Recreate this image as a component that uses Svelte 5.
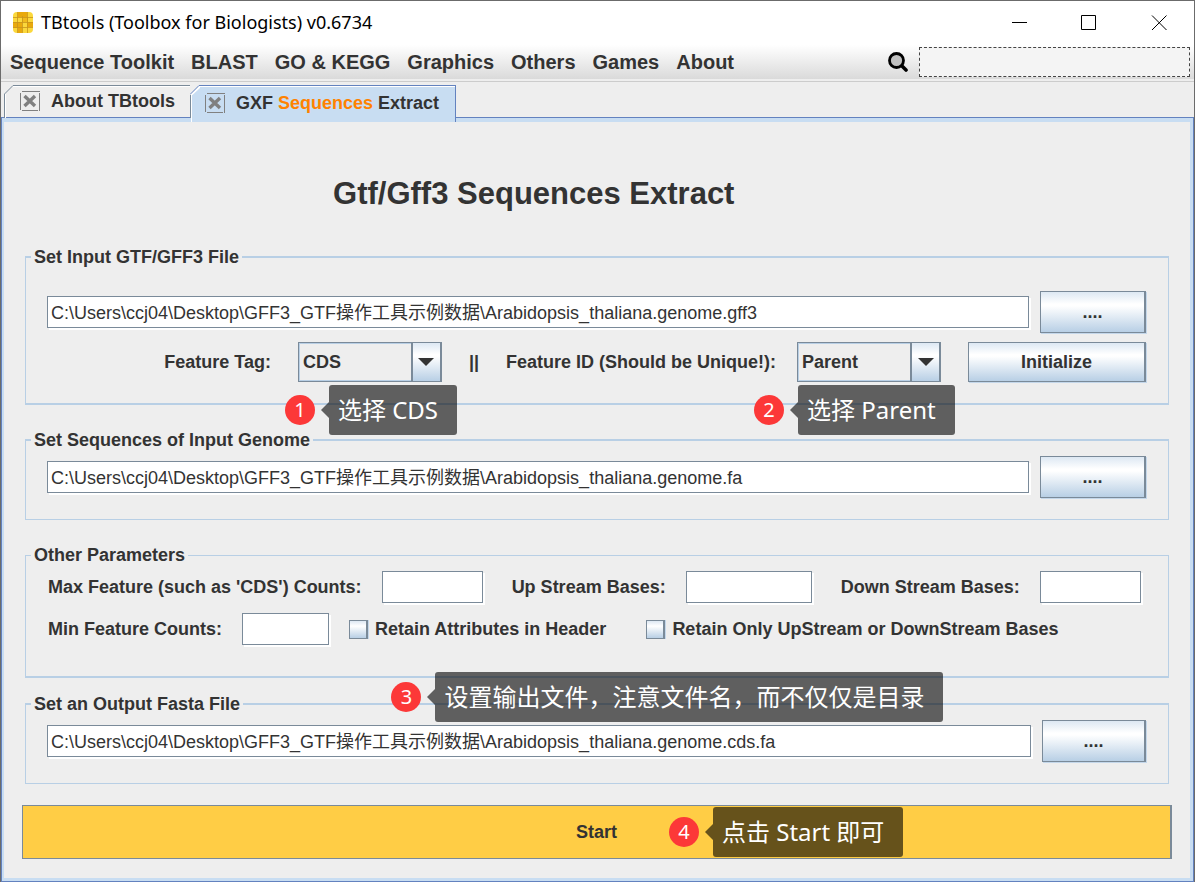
<script>
  // Menu entries
  const menus = ['Sequence Toolkit', 'BLAST', 'GO & KEGG', 'Graphics', 'Others', 'Games', 'About'];

  // Form state
  let gffFile = 'C:\\Users\\ccj04\\Desktop\\GFF3_GTF操作工具示例数据\\Arabidopsis_thaliana.genome.gff3';
  let genomeFile = 'C:\\Users\\ccj04\\Desktop\\GFF3_GTF操作工具示例数据\\Arabidopsis_thaliana.genome.fa';
  let outputFile = 'C:\\Users\\ccj04\\Desktop\\GFF3_GTF操作工具示例数据\\Arabidopsis_thaliana.genome.cds.fa';
  let featureTag = 'CDS';
  let featureId = 'Parent';
  let search = '';
  let maxCount = '';
  let minCount = '';
  let upStream = '';
  let downStream = '';
  let retainAttributes = false;
  let retainOnly = false;
</script>

{#snippet closeBox()}
  <svg class="close-box" viewBox="0 0 20 20" aria-hidden="true">
    <path d="M2 .5H20M.5 2V19M2 19.5H18M19.5 2V20" stroke="#808080" fill="none" />
    <path d="M4.5 5L15 15M15 5L4.5 15" stroke="#808080" stroke-width="3.4" />
  </svg>
{/snippet}

{#snippet callout(number, text)}
  <span class="badge">{number}</span>
  <span class="bubble">{text}</span>
{/snippet}

<div class="window">
  <header class="titlebar">
    <svg class="logo" viewBox="0 0 20 22" aria-hidden="true">
      <rect x="0" y="0" width="20" height="21" rx="4" fill="#fbd83c" />
      <path d="M5 0h9v5h-9zM0 10h9v6h-9zM13 5h2v5h-2zM14 10h6v5h-6zM5 16h4v5h-4z" fill="#e9a90c" />
      <path d="M9 5h5v5h-5z" fill="#f1bb1d" />
      <path d="M4.5 0V21M9.5 4V21M14.5 0V21M0 5.5H20M0 10.5H20M0 15.5H20" stroke="#c8941c" stroke-width=".8" fill="none" />
    </svg>
    <span class="caption">TBtools (Toolbox for Biologists) v0.6734</span>
    <div class="controls">
      <button type="button" aria-label="Minimize">
        <svg viewBox="0 0 16 16"><path d="M1 7.5H16" /></svg>
      </button>
      <button type="button" aria-label="Maximize">
        <svg viewBox="0 0 16 16"><path d="M.5 .5H14.5V14.5H.5Z" /></svg>
      </button>
      <button type="button" aria-label="Close">
        <svg viewBox="0 0 16 16"><path d="M1 .5L15.5 15M15.5 .5L1 15" /></svg>
      </button>
    </div>
  </header>

  <nav class="menubar">
    {#each menus as menu}
      <button type="button">{menu}</button>
    {/each}
    <svg class="magnifier" viewBox="0 0 20 20" aria-hidden="true">
      <path d="M13 13L18 18" stroke="#000" stroke-width="3.6" stroke-linecap="round" />
      <circle cx="8.5" cy="8.5" r="7" fill="#c0c0c0" stroke="#000" stroke-width="2.8" />
    </svg>
    <input class="search" type="text" aria-label="Search" bind:value={search} />
  </nav>

  <div class="tabs" role="tablist">
    <button class="tab" type="button" role="tab" aria-selected="false">
      <svg class="corner" viewBox="0 0 10 10" aria-hidden="true">
        <path d="M0 0H10L0 10Z" fill="#eee" />
        <path d="M.5 10V9L9 .5H10" stroke="#7a8a99" fill="none" />
      </svg>
      {@render closeBox()}
      <span>About TBtools</span>
    </button>
    <button class="tab selected" type="button" role="tab" aria-selected="true">
      <svg class="corner" viewBox="0 0 10 10" aria-hidden="true">
        <path d="M0 0H10L0 10Z" fill="#eee" />
        <path d="M1 10L10 1.5" stroke="#fff" stroke-width="2" fill="none" />
        <path d="M.5 9L9 .5H10" stroke="#6382bf" fill="none" />
      </svg>
      {@render closeBox()}
      <span>GXF <em>Sequences</em> Extract</span>
    </button>
  </div>

  <main class="panel">
    <h1>Gtf/Gff3 Sequences Extract</h1>

    <fieldset class="thick-top thick-bottom">
      <legend>Set Input GTF/GFF3 File</legend>
      <div class="body tall">
        <div class="file-row">
          <input class="field" type="text" aria-label="Input GTF/GFF3 file" bind:value={gffFile} />
          <button class="metal browse" type="button">....</button>
        </div>
        <div class="tag-row">
          <label for="feature-tag">Feature Tag:</label>
          <div class="combo">
            <select id="feature-tag" bind:value={featureTag}>
              <option>CDS</option>
              <option>exon</option>
              <option>gene</option>
            </select>
            <span class="arrow"></span>
            <div class="callout tag-callout">{@render callout(1, '选择 CDS')}</div>
          </div>
          <span>||</span>
          <label class="id-label" for="feature-id">Feature ID (Should be Unique!):</label>
          <div class="combo">
            <select id="feature-id" bind:value={featureId}>
              <option>Parent</option>
              <option>ID</option>
              <option>Name</option>
            </select>
            <span class="arrow"></span>
            <div class="callout id-callout">{@render callout(2, '选择 Parent')}</div>
          </div>
          <button class="metal initialize" type="button">Initialize</button>
        </div>
      </div>
    </fieldset>

    <fieldset class="thick-top">
      <legend>Set Sequences of Input Genome</legend>
      <div class="body">
        <div class="file-row">
          <input class="field" type="text" aria-label="Genome sequences file" bind:value={genomeFile} />
          <button class="metal browse" type="button">....</button>
        </div>
      </div>
    </fieldset>

    <fieldset class="thick-bottom">
      <legend>Other Parameters</legend>
      <div class="body params">
        <div class="param-row">
          <label class="param">Max Feature (such as 'CDS') Counts: <input class="field medium" type="text" bind:value={maxCount} /></label>
          <label class="param">Up Stream Bases: <input class="field wide" type="text" bind:value={upStream} /></label>
          <label class="param">Down Stream Bases: <input class="field medium" type="text" bind:value={downStream} /></label>
        </div>
        <div class="param-row checks">
          <label class="param">Min Feature Counts: <input class="field narrow" type="text" bind:value={minCount} /></label>
          <label class="check first"><input type="checkbox" bind:checked={retainAttributes} />Retain Attributes in Header</label>
          <label class="check"><input type="checkbox" bind:checked={retainOnly} />Retain Only UpStream or DownStream Bases</label>
        </div>
      </div>
    </fieldset>

    <fieldset class="thick-top output">
      <legend>Set an Output Fasta File</legend>
      <div class="body">
        <div class="file-row">
          <input class="field" type="text" aria-label="Output fasta file" bind:value={outputFile} />
          <button class="metal browse" type="button">....</button>
        </div>
      </div>
      <div class="callout output-callout">{@render callout(3, '设置输出文件，注意文件名，而不仅仅是目录')}</div>
    </fieldset>

    <div class="start-row">
      <button class="start" type="button">Start</button>
      <div class="callout start-callout">{@render callout(4, '点击 Start 即可')}</div>
    </div>
  </main>
</div>

<style>
  :global(body) {
    background: #eee;
  }

  .window {
    --line: #b8cfe5;
    --edge: #7a8a99;
    --accent: #6382bf;
    --tab: #c8ddf2;
    display: flex;
    flex-direction: column;
    box-sizing: border-box;
    min-height: 100vh;
    border: 1px solid #6b6b6b;
    background: #eee;
    color: #333;
    font: bold 18px/22px "Liberation Sans", "Noto Sans CJK SC", sans-serif;
  }

  .window * {
    box-sizing: border-box;
  }

  button, input, select {
    margin: 0;
    padding: 0;
    border: none;
    border-radius: 0;
    background: none;
    color: inherit;
    font: inherit;
  }

  svg {
    display: block;
    flex: none;
  }

  /* Title bar */
  .titlebar {
    display: flex;
    align-items: center;
    height: 44px;
    padding-left: 12px;
    background: #fff;
    color: #000;
    font: 18px/24px "Noto Sans", "Open Sans", sans-serif;
  }

  .logo {
    width: 20px;
    height: 22px;
    margin-right: 8px;
  }

  .caption {
    flex: 1;
    padding-bottom: 2px;
  }

  .controls {
    display: flex;
  }

  .controls button {
    display: flex;
    align-items: center;
    justify-content: center;
    width: 70px;
    height: 44px;
  }

  .controls svg {
    width: 16px;
    height: 16px;
    fill: none;
    stroke: #000;
  }

  /* Menu bar */
  .menubar {
    display: flex;
    align-items: center;
    gap: 17px;
    height: 34px;
    padding: 0 4px 0 9px;
    background: linear-gradient(#fff, #dadada);
    font-size: 20px;
  }

  .magnifier {
    width: 20px;
    height: 20px;
    margin-left: auto;
    margin-right: -6px;
  }

  .search {
    width: 23%;
    height: 30px;
    border: 1px dashed #444;
    background: #f4f4f4;
  }

  /* Tabs */
  .tabs {
    display: flex;
    align-items: flex-end;
    margin-top: 2px;
    padding: 3px 0 0 3px;
    border-top: 1px solid #ccc;
  }

  .tab {
    position: relative;
    display: flex;
    align-items: center;
    gap: 11px;
    height: 33px;
    padding: 0 15px 2px;
    border: 1px solid var(--edge);
    border-bottom: none;
    box-shadow: inset 1px 1px #fff;
    white-space: nowrap;
  }

  .tab.selected {
    z-index: 1;
    height: 37px;
    margin-bottom: -4px;
    padding: 0 16px 2px 14px;
    border-color: var(--accent);
    border-left: none;
    background: var(--tab);
  }

  .corner {
    position: absolute;
    top: -1px;
    left: -1px;
    width: 10px;
    height: 10px;
  }

  .close-box {
    width: 20px;
    height: 20px;
  }

  em {
    color: #ff8200;
    font-style: normal;
  }

  /* Main panel */
  .panel {
    flex: 1;
    margin: 0 1px;
    padding: 0 18px 17px;
    border: solid var(--tab);
    border-width: 4px 3px 3px 2px;
    outline: 1px solid var(--accent);
  }

  h1 {
    margin: 54px 0 34px;
    padding-right: 11%;
    font-size: 31px;
    line-height: 36px;
    text-align: center;
  }

  fieldset {
    position: relative;
    min-width: 0;
    margin: 0 3px 24px;
    padding: 0;
    border: 1px solid var(--line);
  }

  .thick-top {
    border-top-width: 2px;
  }

  .thick-bottom {
    border-bottom-width: 2px;
  }

  legend {
    margin-left: 5px;
    padding: 0 3px;
  }

  .body {
    display: flex;
    flex-direction: column;
    gap: 9px;
    padding: 5px 22px 21px 21px;
  }

  .tall {
    padding-top: 23px;
  }

  .params {
    gap: 10px;
    padding-bottom: 31px;
  }

  fieldset:has(.params) {
    margin-bottom: 15px;
  }

  .output {
    margin-bottom: 21px;
  }

  .file-row {
    display: flex;
    align-items: center;
    gap: 11px;
  }

  .field {
    flex: 1;
    min-width: 0;
    height: 32px;
    padding: 0 3px 2px;
    border: 1px solid var(--edge);
    background: #fff;
    box-shadow: 2px 2px #fff;
    font-weight: normal;
  }

  .metal {
    border: 1px solid var(--edge);
    border-right-width: 2px;
    background: linear-gradient(#dde8f3, #fff 30%, #fff 35%, #b8cfe5);
    box-shadow: 1px 1px #c4d7ea;
  }

  .browse {
    width: 106px;
    height: 42px;
  }

  .output .browse {
    width: 104px;
  }

  .initialize {
    width: 178px;
    height: 40px;
  }

  /* Feature tag row */
  .tag-row {
    display: flex;
    align-items: center;
    justify-content: flex-end;
    gap: 27px;
  }

  .id-label {
    margin-right: -6px;
  }

  .combo {
    position: relative;
    display: flex;
    width: 144px;
    height: 40px;
    border: 1px solid var(--edge);
  }

  .combo select {
    flex: 1;
    appearance: none;
    padding: 0 3px;
    border: 1px solid var(--line);
  }

  .arrow {
    position: absolute;
    top: 0;
    right: 0;
    display: grid;
    place-items: center;
    width: 30px;
    height: 100%;
    border: solid var(--edge);
    border-width: 0 1px 0 2px;
    background: linear-gradient(#dde8f3, #fff 30%, #fff 35%, #b8cfe5);
    pointer-events: none;
  }

  .arrow::before {
    content: "";
    border: 8px solid transparent;
    border-top-color: #333;
    border-bottom: none;
  }

  /* Parameters */
  .param-row {
    display: flex;
    gap: 29px;
    padding-left: 1px;
  }

  .checks {
    gap: 20px;
  }

  .param {
    display: flex;
    align-items: center;
    gap: 20px;
  }

  .narrow {
    flex: none;
    width: 87px;
  }

  .medium {
    flex: none;
    width: 101px;
  }

  .wide {
    flex: none;
    width: 126px;
  }

  .check {
    display: flex;
    align-items: center;
    gap: 7px;
    margin-left: 20px;
  }

  .first {
    margin-left: 0;
  }

  .check input {
    appearance: none;
    width: 19px;
    height: 19px;
    border: 1px solid var(--edge);
    border-right-width: 2px;
    background: linear-gradient(#dde8f3, #fff 30%, #b8cfe5);
    box-shadow: 1px 0 #c4d7ea;
  }

  .check input:checked {
    background: var(--accent);
  }

  /* Start */
  .start-row {
    position: relative;
  }

  .start {
    display: block;
    width: 100%;
    height: 54px;
    border: 1px solid var(--edge);
    border-right-width: 2px;
    background: #ffcd45;
  }

  /* Numbered callouts */
  .callout {
    position: absolute;
    z-index: 2;
    display: flex;
    align-items: center;
    gap: 14px;
    color: #fff;
    font-weight: normal;
    white-space: nowrap;
  }

  .badge {
    width: 30px;
    height: 30px;
    border-radius: 50%;
    background: #fc3838;
    font: 20px/30px "Noto Sans", sans-serif;
    text-align: center;
  }

  .bubble {
    position: relative;
    height: 50px;
    padding: 0 19px 0 9px;
    border-radius: 3px;
    background: rgba(0, 0, 0, 0.6);
    font: 24px/50px "Noto Sans", "Noto Sans CJK SC", sans-serif;
  }

  .bubble::before {
    content: "";
    position: absolute;
    top: 17px;
    right: 100%;
    border: 8px solid transparent;
    border-right-color: rgba(0, 0, 0, 0.6);
    border-left: none;
  }

  .tag-callout {
    top: 42px;
    left: -14px;
  }

  .id-callout {
    top: 42px;
    left: -44px;
  }

  .output-callout {
    top: -43px;
    left: 32%;
  }

  .start-callout {
    top: 2px;
    left: calc(50% + 72px);
  }
</style>
